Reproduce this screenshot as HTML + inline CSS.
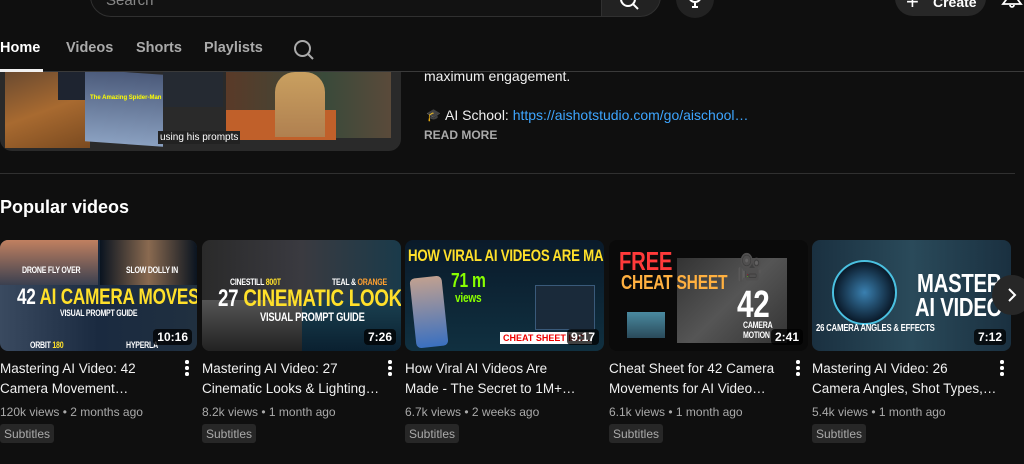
<!DOCTYPE html>
<html><head><meta charset="utf-8"><style>
*{margin:0;padding:0;box-sizing:border-box}
body{width:1024px;height:464px;background:#0f0f0f;color:#f1f1f1;font-family:"Liberation Sans",sans-serif;overflow:hidden;position:relative}
.a{position:absolute}
.tab{position:absolute;top:40px;font-size:14.5px;font-weight:bold;color:#aaa}
.th{position:absolute;top:240px;height:111px;border-radius:8px;overflow:hidden}
.dur{position:absolute;right:5px;bottom:6px;background:rgba(0,0,0,.75);color:#fff;font-size:12px;font-weight:bold;padding:1px 4px;border-radius:4px}
.tt{position:absolute;top:359px;font-size:13.5px;line-height:20px;color:#f1f1f1;white-space:nowrap}
.mt{position:absolute;top:405px;font-size:12px;color:#aaa}
.sb{position:absolute;top:424px;height:19px;font-size:12px;color:#aaa;background:#272727;padding:3px 4px;border-radius:3px}
.dots{position:absolute;top:360px;width:4px}
.dots i{display:block;width:3.5px;height:3.5px;background:#fff;border-radius:50%;margin-bottom:2.5px}
.big{position:absolute;font-weight:bold;white-space:nowrap;transform:scaleX(.78);transform-origin:0 0;letter-spacing:-0.3px}
</style></head><body>
<div class="a" style="left:90px;top:-25px;width:512px;height:42px;border:1px solid #303030;border-radius:21px 0 0 21px;background:#121212"></div>
<div class="a" style="left:106px;top:-8px;font-size:15px;color:#888">Search</div>
<div class="a" style="left:601px;top:-25px;width:60px;height:42px;background:#222;border-radius:0 21px 21px 0;border:1px solid #303030"></div>
<svg class="a" style="left:618px;top:-8px" width="24" height="24" viewBox="0 0 24 24"><circle cx="10" cy="7" r="7" fill="none" stroke="#fff" stroke-width="2"/><path d="M15 12l5 5" stroke="#fff" stroke-width="2"/></svg>
<div class="a" style="left:676px;top:-20px;width:38px;height:38px;border-radius:50%;background:#222"></div>
<svg class="a" style="left:685px;top:-6px" width="20" height="20" viewBox="0 0 20 20"><path d="M4 2a6 6 0 0012 0M10 8v5M7 13h6" stroke="#fff" stroke-width="2" fill="none"/></svg>
<div class="a" style="left:895px;top:-20px;width:91px;height:36px;border-radius:18px;background:#272727"></div>
<div class="a" style="left:906px;top:-8px;font-size:22px;color:#fff;font-weight:300;line-height:20px">+</div>
<div class="a" style="left:933px;top:-6px;font-size:14px;font-weight:bold;color:#fff">Create</div>
<svg class="a" style="left:1000px;top:-8px" width="24" height="20" viewBox="0 0 24 20"><path d="M6 0v8l-3 4h18l-3-4V0M10 13a2 2 0 004 0" stroke="#fff" stroke-width="1.8" fill="none"/></svg>
<div class="tab" style="left:0;color:#fff">Home</div>
<div class="tab" style="left:66px">Videos</div>
<div class="tab" style="left:136px">Shorts</div>
<div class="tab" style="left:204px">Playlists</div>
<svg class="a" style="left:293px;top:39px" width="22" height="22" viewBox="0 0 22 22"><circle cx="9.5" cy="9.5" r="7.5" fill="none" stroke="#aaa" stroke-width="2"/><path d="M15 15l5 5" stroke="#aaa" stroke-width="2"/></svg>
<div class="a" style="left:0;top:71px;width:1024px;height:1px;background:#3a3a3a"></div>
<div class="a" style="left:0;top:69px;width:43px;height:3px;background:#f1f1f1"></div>
<div class="a" style="left:0;top:72px;width:401px;height:79px;background:#2a2a2a;border-radius:0 0 12px 12px;overflow:hidden">
 <div class="a" style="left:5px;top:0;width:85px;height:76px;background:linear-gradient(160deg,#6a4a30,#a86a30 50%,#7a4a20)"></div>
 <div class="a" style="left:58px;top:0;width:30px;height:28px;background:#1e2430"></div>
 <div class="a" style="left:85px;top:0;width:78px;height:72px;background:linear-gradient(#4b5a7a,#8aa0c0);transform:skewY(4deg)"></div>
 <div class="a" style="left:90px;top:23px;font-size:6px;color:#ff0;font-weight:bold">The Amazing Spider-Man</div>
 <div class="a" style="left:163px;top:0;width:60px;height:35px;background:#252a32"></div>
 <div class="a" style="left:226px;top:0;width:165px;height:66px;background:linear-gradient(90deg,#5a3a28,#3a4a3a 60%,#5a4a3a)"></div>
 <div class="a" style="left:226px;top:38px;width:110px;height:30px;background:#c0602a"></div>
 <div class="a" style="left:275px;top:0;width:50px;height:65px;background:linear-gradient(#c9a060,#b08050);border-radius:20px 20px 0 0"></div>
 <div class="a" style="left:158px;top:59px;background:#222;color:#fff;font-size:10px;padding:1px 2px">using his prompts</div>
</div>
<div class="a" style="left:424px;top:68px;font-size:14px;color:#f1f1f1">maximum engagement.</div>
<div class="a" style="left:426px;top:108px;font-size:12px;color:#aaa">🎓</div>
<div class="a" style="left:445px;top:107px;font-size:14px;color:#f1f1f1">AI School: <span style="color:#3ea6ff">https://aishotstudio.com/go/aischool…</span></div>
<div class="a" style="left:424px;top:128px;font-size:12px;font-weight:bold;color:#aaa">READ MORE</div>
<div class="a" style="left:0;top:173px;width:1015px;height:1px;background:#303030"></div>
<div class="a" style="left:0;top:197px;font-size:18px;font-weight:bold;color:#fff">Popular videos</div>
<div class="th" style="left:0;width:197px;background:linear-gradient(90deg,#3a4a60,#1a2a40 50%,#203040)">
 <div class="a" style="left:0;top:0;width:98px;height:45px;background:linear-gradient(#c08060,#3a4050)"></div>
 <div class="a" style="left:100px;top:0;width:97px;height:45px;background:linear-gradient(90deg,#0a1420,#8a6a50 50%,#0a1420)"></div>
 <div class="big" style="left:22px;top:25px;font-size:9px;color:#fff">DRONE FLY OVER</div>
 <div class="big" style="left:126px;top:25px;font-size:9px;color:#fff">SLOW DOLLY IN</div>
 <div class="big" style="left:17px;top:44px;font-size:22px;color:#fff">42 <span style="color:#ffe02a">AI CAMERA MOVES</span></div>
 <div class="big" style="left:60px;top:68px;font-size:9px;color:#fff">VISUAL PROMPT GUIDE</div>
 <div class="big" style="left:30px;top:100px;font-size:9px;color:#fff">ORBIT <span style="color:#ffe02a">180</span></div>
 <div class="big" style="left:126px;top:100px;font-size:9px;color:#fff">HYPERLA</div>
 <div class="dur">10:16</div>
</div>
<div class="th" style="left:202px;width:199px;background:linear-gradient(90deg,#2a2a2a,#3a3a40 50%,#1a3a4a)">
 <div class="a" style="left:0;top:60px;width:100px;height:51px;background:linear-gradient(#555,#222)"></div>
 <div class="a" style="left:100px;top:60px;width:99px;height:51px;background:linear-gradient(#1a4050,#0a2030)"></div>
 <div class="big" style="left:28px;top:37px;font-size:9px;color:#fff">CINESTILL <span style="color:#ffe02a">800T</span></div>
 <div class="big" style="left:130px;top:37px;font-size:9px;color:#fff">TEAL &amp; <span style="color:#ffa030">ORANGE</span></div>
 <div class="big" style="left:16px;top:45px;font-size:24px;color:#fff">27 <span style="color:#ffe02a">CINEMATIC LOOKS</span></div>
 <div class="big" style="left:58px;top:70px;font-size:12px;color:#fff">VISUAL PROMPT GUIDE</div>
 <div class="dur">7:26</div>
</div>
<div class="th" style="left:405px;width:199px;background:linear-gradient(#0a1a2a,#103040)">
 <div class="big" style="left:3px;top:6px;font-size:17px;color:#ffe02a">HOW VIRAL AI VIDEOS ARE MADE</div>
 <div class="a" style="left:8px;top:37px;width:32px;height:70px;background:linear-gradient(#c0a090,#3a70c0);border-radius:5px;transform:rotate(-6deg)"></div>
 <div class="big" style="left:46px;top:30px;font-size:20px;color:#8f0">71 m</div>
 <div class="big" style="left:50px;top:50px;font-size:13px;color:#8f0">views</div>
 <div class="a" style="left:130px;top:45px;width:60px;height:45px;background:#1a2a3a;border:1px solid #3a5a7a"></div>
 <div class="a" style="left:95px;top:92px;background:#fff;color:#e00;font-size:9px;font-weight:bold;padding:1px 3px;white-space:nowrap">CHEAT SHEET INCL</div>
 <div class="dur">9:17</div>
</div>
<div class="th" style="left:609px;width:199px;background:#0a0a0a">
 <div class="a" style="left:68px;top:18px;width:110px;height:85px;background:linear-gradient(135deg,#333,#555 50%,#333)"></div>
 <div class="a" style="left:18px;top:72px;width:38px;height:26px;background:linear-gradient(#4a8aa0,#2a4a5a)"></div>
 <div class="big" style="left:10px;top:6px;font-size:26px;color:#ff3a3a">FREE</div>
 <div class="big" style="left:12px;top:32px;font-size:20px;color:#ffb040">CHEAT SHEET</div>
 <div class="big" style="left:128px;top:12px;font-size:26px;color:#fff">🎥</div>
 <div class="big" style="left:128px;top:44px;font-size:38px;color:#fff">42</div>
 <div class="big" style="left:134px;top:80px;font-size:9px;color:#fff;line-height:10px">CAMERA<br>MOTION</div>
 <div class="dur">2:41</div>
</div>
<div class="th" style="left:812px;width:199px;background:linear-gradient(90deg,#1a3040,#2a4a5a 50%,#1a3040)">
 <div class="a" style="left:20px;top:20px;width:65px;height:65px;border-radius:50%;background:radial-gradient(#3a80b0,#0a1a2a 70%);border:2px solid #4ac0e0"></div>
 <div class="big" style="left:105px;top:28px;font-size:26px;color:#fff">MASTER</div>
 <div class="big" style="left:103px;top:52px;font-size:26px;color:#fff">AI VIDEO</div>
 <div class="big" style="left:4px;top:83px;font-size:10px;color:#fff">26 CAMERA ANGLES &amp; EFFECTS</div>
 <div class="dur">7:12</div>
</div>
<div class="a" style="left:992px;top:275px;width:40px;height:40px;border-radius:50%;background:#272727"></div>
<svg class="a" style="left:1004px;top:286px" width="16" height="18" viewBox="0 0 16 18"><path d="M5 3l6 6-6 6" stroke="#fff" stroke-width="2" fill="none"/></svg>
<div class="tt" style="left:0">Mastering AI Video: 42<br>Camera Movement…</div>
<div class="tt" style="left:202px">Mastering AI Video: 27<br>Cinematic Looks &amp; Lighting…</div>
<div class="tt" style="left:405px">How Viral AI Videos Are<br>Made - The Secret to 1M+…</div>
<div class="tt" style="left:609px">Cheat Sheet for 42 Camera<br>Movements for AI Video…</div>
<div class="tt" style="left:812px">Mastering AI Video: 26<br>Camera Angles, Shot Types,…</div>
<div class="dots" style="left:185px"><i></i><i></i><i></i></div>
<div class="dots" style="left:388px"><i></i><i></i><i></i></div>
<div class="dots" style="left:796px"><i></i><i></i><i></i></div>
<div class="dots" style="left:1000px"><i></i><i></i><i></i></div>
<div class="mt" style="left:0">120k views • 2 months ago</div>
<div class="mt" style="left:202px">8.2k views • 1 month ago</div>
<div class="mt" style="left:405px">6.7k views • 2 weeks ago</div>
<div class="mt" style="left:609px">6.1k views • 1 month ago</div>
<div class="mt" style="left:812px">5.4k views • 1 month ago</div>
<div class="sb" style="left:0">Subtitles</div>
<div class="sb" style="left:202px">Subtitles</div>
<div class="sb" style="left:405px">Subtitles</div>
<div class="sb" style="left:609px">Subtitles</div>
<div class="sb" style="left:812px">Subtitles</div>
</body></html>
